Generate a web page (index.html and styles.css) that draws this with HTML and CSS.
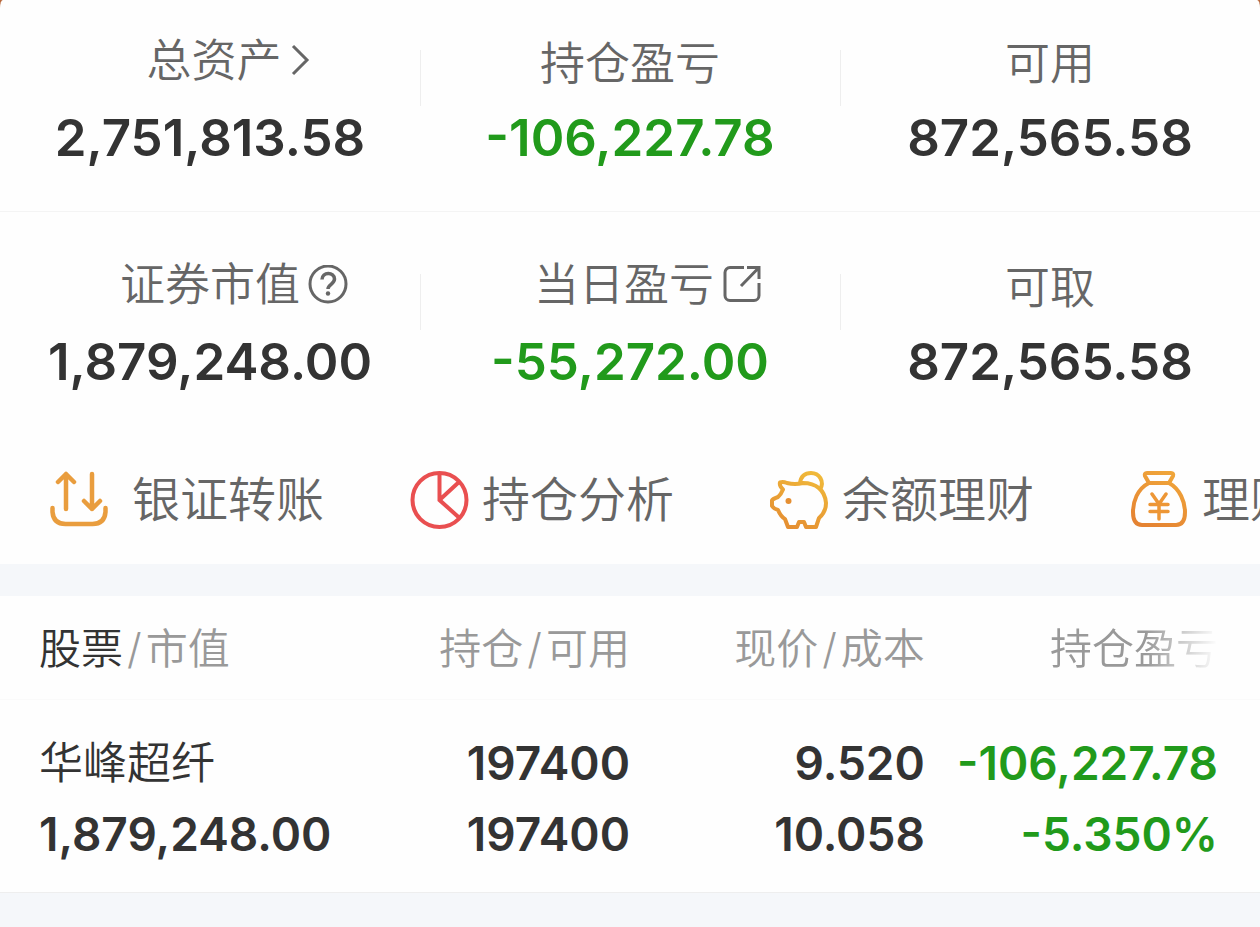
FILE: index.html
```html
<!DOCTYPE html>
<html lang="zh-CN">
<head>
    <meta charset="UTF-8">
    <meta name="viewport" content="width=device-width, initial-scale=1.0">
    <title>持仓</title>
    <link rel="stylesheet" href="styles.css">
</head>

<body>
    <main class="container">
        <!-- account summary -->
        <section class="summary">
            <div class="item">
                <button class="label label-btn">总资产
                    <svg width="20" height="34" viewBox="0 0 20 34" fill="none" stroke="#666" stroke-width="3"><path d="M3 2l14 14L3 30" /></svg>
                </button>
                <div class="value">2,751,813.58</div>
            </div>
            <div class="item">
                <div class="label">持仓盈亏</div>
                <div class="value down">-106,227.78</div>
            </div>
            <div class="item">
                <div class="label">可用</div>
                <div class="value">872,565.58</div>
            </div>
        </section>
        <section class="summary">
            <div class="item">
                <button class="label label-btn label-help">证券市值
                    <svg width="40" height="40" viewBox="0 0 40 40" fill="none" stroke="#666" stroke-width="3">
                        <circle cx="20" cy="19" r="18" />
                        <path d="M14 14.500c0-8 12.500-8 12.500-.5 0 5-6.500 5.500-6.500 10" stroke-width="3.500" />
                        <circle cx="20" cy="28.500" r="2.200" fill="#666" stroke="none" />
                    </svg>
                </button>
                <div class="value">1,879,248.00</div>
            </div>
            <div class="item">
                <button class="label label-btn">当日盈亏
                    <svg width="40" height="40" viewBox="0 0 40 40" fill="none" stroke="#666" stroke-width="3">
                        <path d="M22 2.500H8a5 5 0 0 0-5 5v23a5 5 0 0 0 5 5h24a5 5 0 0 0 5-5V18" />
                        <path d="M19 21L36 3.500M25 2.500h12V14" />
                    </svg>
                </button>
                <div class="value down">-55,272.00</div>
            </div>
            <div class="item">
                <div class="label">可取</div>
                <div class="value">872,565.58</div>
            </div>
        </section>

        <nav class="actions">
            <button class="action action-first">
                <svg width="60" height="60" viewBox="0 0 60 60" fill="none" stroke="#e99d3e" stroke-width="4.500" stroke-linecap="round" stroke-linejoin="round">
                    <path d="M16 39V4M8 12l8-8 8 8M42 4v35M34 31l8 8 8-8" />
                    <path d="M2.500 38v4q1 12 13 12h27q12 0 13-12v-4" />
                </svg>
                银证转账
            </button>
            <button class="action">
                <svg width="60" height="60" viewBox="0 0 60 60" fill="none" stroke="#e94f50" stroke-width="4">
                    <circle cx="29.500" cy="30" r="27" />
                    <path d="M29.500 3v27l20 18M29.500 30L49 12" />
                </svg>
                持仓分析
            </button>
            <button class="action">
                <svg width="60" height="60" viewBox="0 0 60 60" fill="none" stroke="url(#gold)" stroke-width="4" stroke-linejoin="round">
                    <defs>
                        <linearGradient id="gold" gradientUnits="userSpaceOnUse" x1="45" y1="3" x2="20" y2="58">
                            <stop offset="0" stop-color="#f0b93a" />
                            <stop offset="1" stop-color="#e58f32" />
                        </linearGradient>
                    </defs>
                    <path d="M30 13C31 6 35 3 41 3c8 0 14 8 9 17" />
                    <path d="M17 13q-4-1.500-7-.5-1 3 3 7-2 5-5 7.500-5.500 2-6 3.500V36q2 3 6 4 3 7 7 9l3 8h9l2-5h5l2 5h10l3-9q7-6 7-15C55 20 46 13 33 13q-8 2-16 0z" />
                    <circle cx="18.500" cy="31" r="3" fill="#e58f32" stroke="none" />
                </svg>
                余额理财
            </button>
            <button class="action">
                <svg width="60" height="60" viewBox="0 0 60 60" fill="none" stroke="url(#bag)" stroke-width="4" stroke-linejoin="round" stroke-linecap="round">
                    <defs>
                        <linearGradient id="bag" gradientUnits="userSpaceOnUse" x1="45" y1="3" x2="20" y2="58">
                            <stop offset="0" stop-color="#f0a63a" />
                            <stop offset="1" stop-color="#e58332" />
                        </linearGradient>
                    </defs>
                    <path d="M17 3h24q3 0 2 3l-4 7H19l-4-7q-1-3 2-3z" />
                    <path d="M19 13C7 19 3 32 3 42q0 13 9 13h34q9 0 9-13c0-10-5-23-16-29" />
                    <path d="M22 24l7 10 7-10M20 34.500h18M20 41.500h18M29 34v15" stroke="#ed9635" stroke-width="3.500" />
                </svg>
                理财
            </button>
        </nav>

        <!-- holdings -->
        <table class="stocks">
            <thead>
                <tr>
                    <th><b>股票</b><i>/</i>市值</th>
                    <th>持仓<i>/</i>可用</th>
                    <th>现价<i>/</i>成本</th>
                    <th><span class="fade">持仓盈亏</span></th>
                </tr>
            </thead>
            <tbody>
                <tr>
                    <td class="name">华峰超纤</td>
                    <td>197400</td>
                    <td>9.520</td>
                    <td class="down">-106,227.78</td>
                </tr>
                <tr>
                    <td>1,879,248.00</td>
                    <td>197400</td>
                    <td>10.058</td>
                    <td class="down">-5.350%</td>
                </tr>
            </tbody>
        </table>
    </main>
</body>
</html>
```
FILE: styles.css
```css
* {
    box-sizing: border-box;
}

html {
    background-color: #f5f7fa;
}

body {
    margin: 0;
    font-family: Inter, "Noto Sans CJK SC", sans-serif;
    color: #333;
    background: linear-gradient(#b8683c, #b8683c) top / 100% 12px no-repeat;
    overflow-x: hidden;
}

button {
    border: 0;
    padding: 0;
    background: none;
    font-family: inherit;
    cursor: pointer;
}

.container {
    background-color: #fefefe;
    border-radius: 3px 3px 0 0 / 8px 8px 0 0;
    overflow: hidden;
}

.summary {
    display: flex;
    height: 212px;
    padding-top: 34px;
    border-bottom: 1px solid #f4f4f4;
}

.summary + .summary {
    height: 224px;
    padding-top: 46px;
    border-bottom: 0;
}

.item {
    flex: 1;
    display: flex;
    flex-direction: column;
    align-items: center;
    background: linear-gradient(#eee, #eee) left 16px / 1px 56px no-repeat;
}

.item:first-child {
    background: none;
}

.label {
    display: flex;
    align-items: center;
    height: 60px;
    font-size: 45px;
    line-height: 60px;
    font-weight: 350;
    color: #666;
}

.label-btn {
    gap: 8px;
    padding-left: 36px;
    padding-bottom: 6px;
}

.label-help {
    padding-left: 48px;
}

.value {
    margin-top: 12px;
    font-size: 51px;
    line-height: 64px;
    font-weight: 600;
}

.down {
    color: #219a1b;
}

.actions {
    display: flex;
    height: 128px;
    padding-left: 50px;
    overflow: hidden;
}

.action {
    flex: 0 0 360px;
    display: flex;
    align-items: center;
    gap: 12px;
    font-size: 48px;
    line-height: 62px;
    font-weight: 350;
    color: #666;
    white-space: nowrap;
}

.action-first {
    gap: 22px;
}

.stocks {
    width: 100%;
    table-layout: fixed;
    border-collapse: separate;
    border-spacing: 0;
    border-top: 32px solid #f5f7fa;
    border-bottom: 1px solid #eee;
}

.stocks th,
.stocks td {
    padding: 0;
    text-align: right;
}

.stocks th {
    height: 104px;
    padding-top: 2px;
    font-size: 42px;
    line-height: 60px;
    font-weight: 350;
    color: #999;
    border-bottom: 1px solid #fafafa;
}

.stocks th:first-child,
.stocks td:first-child {
    width: 26.6%;
    padding-left: 39px;
    text-align: left;
}

.stocks th:last-child,
.stocks td:last-child {
    width: 26.6%;
    padding-right: 42px;
}

.stocks th b {
    font-weight: 350;
    color: #333;
}

.stocks th i {
    margin: 0 4px;
    font-style: normal;
}

.stocks td {
    font-size: 46px;
    line-height: 71px;
    font-weight: 600;
}

.stocks tr:first-child td {
    padding-top: 28px;
}

.stocks tr:last-child td {
    padding-bottom: 22px;
}

.stocks .name {
    font-size: 44px;
    font-weight: 350;
}

.fade {
    -webkit-mask-image: linear-gradient(to left, transparent, #000 72px);
    mask-image: linear-gradient(to left, transparent, #000 72px);
}
```
